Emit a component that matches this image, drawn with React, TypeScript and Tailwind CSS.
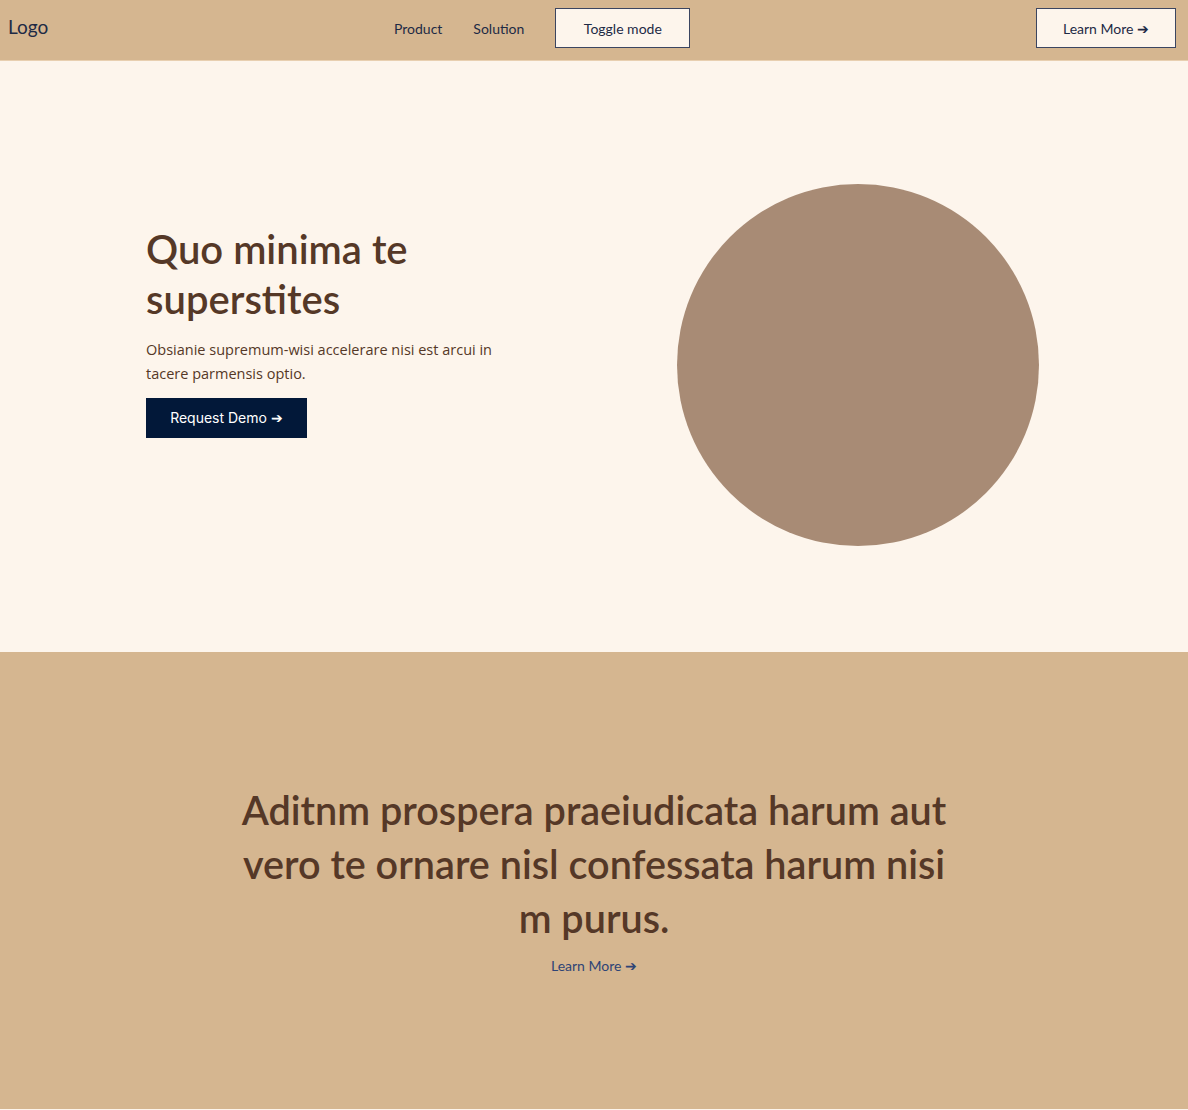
import React from "react";

export default function App() {
  return (
    <div className="w-[1188px] min-h-[1110px] bg-[#fdf5ec]">
      <nav className="h-[61px] bg-[#d5b690] flex items-start justify-between px-2 pt-[8px] border-b border-[#e8cfb0]" style={{ fontFamily: "Lato, sans-serif" }}>
        <div className="h-[39px] flex items-center text-[19px] text-[#1e2a45]">Logo</div>
        <div className="flex items-center text-[14px] text-[#1e2a45]">
          <a className="mr-[31px]">Product</a>
          <a className="mr-[31px]">Solution</a>
          <button className="w-[135px] h-[40px] bg-[#fdf5ec] border border-[#3b4560] text-[14px] text-[#1e2a45]">Toggle mode</button>
        </div>
        <div className="flex justify-end pr-[4px]">
          <button className="w-[140px] h-[40px] bg-[#fdf5ec] border border-[#3b4560] text-[14px] text-[#1e2a45]">Learn More ➔</button>
        </div>
      </nav>
      <section className="h-[591px] flex items-center justify-between pl-[146px] pr-[149px]">
        <div className="w-[380px] -mt-[52px]">
          <h1 className="text-[40px] leading-[50px] font-semibold text-[#553827] w-[320px]" style={{ fontFamily: "Lato, sans-serif" }}>
            Quo minima te superstites
          </h1>
          <p className="mt-[14px] text-[14.5px] leading-[24px] text-[#553827] w-[360px]" style={{ fontFamily: "'Open Sans', sans-serif" }}>
            Obsianie supremum-wisi accelerare nisi est arcui in tacere parmensis optio.
          </p>
          <button className="mt-[12px] w-[161px] h-[40px] bg-[#021839] text-white text-[14px]" style={{ fontFamily: "Inter, sans-serif" }}>
            Request Demo ➔
          </button>
        </div>
        <div className="w-[362px] h-[362px] rounded-full bg-[#a88b75] mt-[16px]"></div>
      </section>
      <section className="h-[457px] bg-[#d5b690] flex flex-col items-center pt-[131px]">
        <h2 className="w-[740px] text-center text-[39.6px] leading-[54px] font-semibold text-[#553827]" style={{ fontFamily: "Lato, sans-serif" }}>
          Aditnm prospera praeiudicata harum aut vero te ornare nisl confessata harum nisi m purus.
        </h2>
        <a className="mt-[10px] text-[14px] text-[#2e4476]" style={{ fontFamily: "Lato, sans-serif" }}>Learn More ➔</a>
      </section>
    </div>
  );
}
